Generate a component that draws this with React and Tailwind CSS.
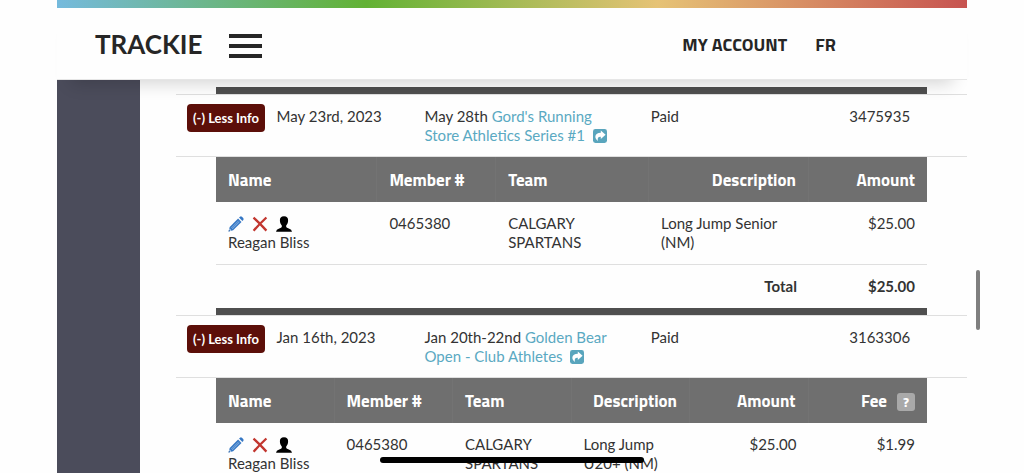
const CELL = "px-3 pt-3 align-top";
const HEAD =
  "border-r border-[#737373] bg-[#6f6f6f] px-3 pt-[14px] pb-3 font-['Titillium_Web','Roboto',sans-serif] text-[17px] font-bold leading-[19px] text-white last:border-r-0";

function PencilIcon() {
  return (
    <svg viewBox="0 0 16 16" className="h-4 w-4" aria-hidden="true">
      <path d="M0.6 15.4 1.7 10.9 10.1 2.5 13.5 5.9 5.1 14.3Z" fill="#3577c4" />
      <path d="M11 1.6 12 .7Q13 0 13.9.8L15.2 2.1Q16 3 15.3 4L14.4 5Z" fill="#3577c4" />
      <path d="M3.2 12.2 10.7 4.7M4.2 13 11.5 5.7" stroke="#b9d4f2" strokeWidth=".6" />
      <path d="M1.5 12.6 3.4 14.5 1.3 14.9Z" fill="#e4effa" />
      <path d="M.6 15.4 1 13.8 2.2 15Z" fill="#285d9f" />
    </svg>
  );
}

function CrossIcon() {
  return (
    <svg viewBox="0 0 16 16" className="h-4 w-4" aria-hidden="true">
      <path d="M1.5 1.7Q6.5 6 14.4 14.6M14.4 1.5Q8 7.5 1.6 14.7" fill="none" stroke="#c2362f" strokeWidth="2.3" />
    </svg>
  );
}

function PersonIcon() {
  return (
    <svg viewBox="0 0 16 16" className="h-4 w-4" aria-hidden="true">
      <path
        d="M8 .3C10.9.3 12.3 2 12.1 4.8 12 7 11.2 8.5 10.2 9.4V11Q10.6 11.7 12.8 12.4 15.8 13.3 16 15.7H0Q.2 13.3 3.2 12.4 5.4 11.7 5.8 11V9.4C4.8 8.5 4 7 3.9 4.8 3.7 2 5.1.3 8 .3Z"
        fill="#000"
      />
    </svg>
  );
}

function ShareIcon() {
  return (
    <svg viewBox="0 0 14 14" className="ml-1 inline h-[14px] w-[14px] align-[-2px]" aria-hidden="true">
      <rect width="14" height="14" rx="2.4" fill="#59a5bd" />
      <path d="M7.8 1.6 12.6 5.7 7.8 9.9V7.7C5.4 7.5 4.2 8.6 4.9 11.9 1.1 9.3 1.2 4 7.8 3.8Z" fill="#fff" />
    </svg>
  );
}

function EndBar({ span }) {
  return (
    <tr>
      <td colSpan={span} className="h-[7px] bg-[#4f4f4f] p-0" />
    </tr>
  );
}

function Athlete() {
  return (
    <td className={`${CELL} pb-3`}>
      <div className="flex h-[19px] items-center gap-2">
        <button type="button" aria-label="Edit"><PencilIcon /></button>
        <button type="button" aria-label="Remove"><CrossIcon /></button>
        <button type="button" aria-label="Profile"><PersonIcon /></button>
      </div>
      Reagan Bliss
    </td>
  );
}

function OrderRow({ date, when, event, order }) {
  const line = "border-y border-[#dfdfdf]";
  return (
    <tr>
      <td className={`${line} py-[9px] pl-[11px] align-top`}>
        <button
          type="button"
          className="block h-7 w-[78px] whitespace-nowrap rounded bg-[#5c0f09] text-center text-[13px] font-bold text-white"
        >
          (-) Less Info
        </button>
      </td>
      <td className={`${line} ${CELL} pb-[11px]`}>{date}</td>
      <td className={`${line} ${CELL} pb-[11px]`}>
        {when}{" "}
        <a href="#event" className="text-[#5aa9c2]">
          {event}&nbsp;<ShareIcon />
        </a>
      </td>
      <td className={`${line} ${CELL} pb-[11px]`}>Paid</td>
      <td className={`${line} ${CELL} pb-[11px]`}>{order}</td>
    </tr>
  );
}

function Detail({ children }) {
  return (
    <tr>
      <td colSpan={5} className="px-10 py-0">
        <table className="w-full table-fixed border-separate border-spacing-0">{children}</table>
      </td>
    </tr>
  );
}

export default function App() {
  return (
    <div className="relative flex h-screen flex-col overflow-hidden bg-[#fefefe] px-[57px] font-['Lato',sans-serif] text-[15px] leading-[19px] text-[#333333]">
      <header className="relative z-10 shrink-0 border-b border-[#e6e6e6] bg-[#fefefe] shadow-[0_18px_16px_-14px_rgba(0,0,0,0.16)]">
        <div className="h-2 bg-[linear-gradient(90deg,#75badd_0%,#62b234_34%,#e6c376_66%,#c75350_100%)]" />
        <div className="flex h-[71px] items-center justify-between pr-[131px] pl-[38px]">
          <div className="flex items-center gap-[26px]">
            <a href="#home" className="text-[26px] font-bold leading-8 text-[#262626]">TRACKIE</a>
            <button type="button" aria-label="Menu" className="mt-1 flex w-[33px] flex-col gap-[6px]">
              <span className="h-[4px] bg-[#262626]" />
              <span className="h-[4px] bg-[#262626]" />
              <span className="h-[4px] bg-[#262626]" />
            </button>
          </div>
          <nav className="flex gap-7 pt-px font-['Titillium_Web','Roboto',sans-serif] text-[18px] font-bold text-[#262626]">
            <a href="#account">MY ACCOUNT</a>
            <a href="#fr">FR</a>
          </nav>
        </div>
      </header>

      <div className="flex min-h-0 flex-1">
        <aside className="w-[83px] shrink-0 bg-[#4b4c5b]" />
        <main className="min-w-0 flex-1 pt-[7px] pl-9">
          <table className="w-full table-fixed border-separate border-spacing-0">
            <colgroup>
              <col className="w-[11.2%]" />
              <col className="w-[18.7%]" />
              <col className="w-[28.6%]" />
              <col className="w-[25.1%]" />
              <col className="w-[16.4%]" />
            </colgroup>
            <tbody>
              <Detail>
                <tbody><EndBar span={1} /></tbody>
              </Detail>
              <OrderRow date="May 23rd, 2023" when="May 28th" event="Gord's Running Store Athletics Series #1" order="3475935" />
              <Detail>
                <colgroup>
                  <col className="w-[22.7%]" />
                  <col className="w-[16.7%]" />
                  <col className="w-[21.5%]" />
                  <col className="w-[22.5%]" />
                  <col className="w-[16.6%]" />
                </colgroup>
                <thead>
                  <tr>
                    <th className={`${HEAD} text-left`}>Name</th>
                    <th className={`${HEAD} text-left`}>Member #</th>
                    <th className={`${HEAD} text-left`}>Team</th>
                    <th className={`${HEAD} text-right`}>Description</th>
                    <th className={`${HEAD} text-right`}>Amount</th>
                  </tr>
                </thead>
                <tbody>
                  <tr>
                    <Athlete />
                    <td className={`${CELL} pb-3`}>0465380</td>
                    <td className={`${CELL} pb-3`}>CALGARY SPARTANS</td>
                    <td className={`${CELL} pb-3`}>Long Jump Senior (NM)</td>
                    <td className={`${CELL} pb-3 text-right`}>$25.00</td>
                  </tr>
                  <tr className="font-bold">
                    <td colSpan={4} className={`${CELL} border-t border-[#dfdfdf] pb-3 text-right`}>Total</td>
                    <td className={`${CELL} border-t border-[#dfdfdf] pb-3 text-right`}>$25.00</td>
                  </tr>
                  <EndBar span={5} />
                </tbody>
              </Detail>
              <OrderRow date="Jan 16th, 2023" when="Jan 20th-22nd" event="Golden Bear Open - Club Athletes" order="3163306" />
              <Detail>
                <thead>
                  <tr>
                    <th className={`${HEAD} text-left`}>Name</th>
                    <th className={`${HEAD} text-left`}>Member #</th>
                    <th className={`${HEAD} text-left`}>Team</th>
                    <th className={`${HEAD} text-right`}>Description</th>
                    <th className={`${HEAD} text-right`}>Amount</th>
                    <th className={`${HEAD} text-right`}>
                      <div className="flex h-[19px] items-center justify-end gap-[10px]">
                        Fee
                        <button type="button" className="h-[18px] w-[18px] rounded-[3px] bg-[#a9a9a9] text-[14px] leading-[18px]">?</button>
                      </div>
                    </th>
                  </tr>
                </thead>
                <tbody>
                  <tr>
                    <Athlete />
                    <td className={`${CELL} pb-3`}>0465380</td>
                    <td className={`${CELL} pb-3`}>CALGARY SPARTANS</td>
                    <td className={`${CELL} pb-3`}>Long Jump U20+ (NM)</td>
                    <td className={`${CELL} pb-3 text-right`}>$25.00</td>
                    <td className={`${CELL} pb-3 text-right`}>$1.99</td>
                  </tr>
                </tbody>
              </Detail>
            </tbody>
          </table>
        </main>
      </div>

      <div className="absolute top-[57%] right-[44px] h-[60px] w-1 rounded-full bg-[#7f7f7f]" />
      <div className="absolute bottom-[10px] left-1/2 z-20 h-[6px] w-[264px] -translate-x-1/2 rounded-full bg-black" />
    </div>
  );
}
